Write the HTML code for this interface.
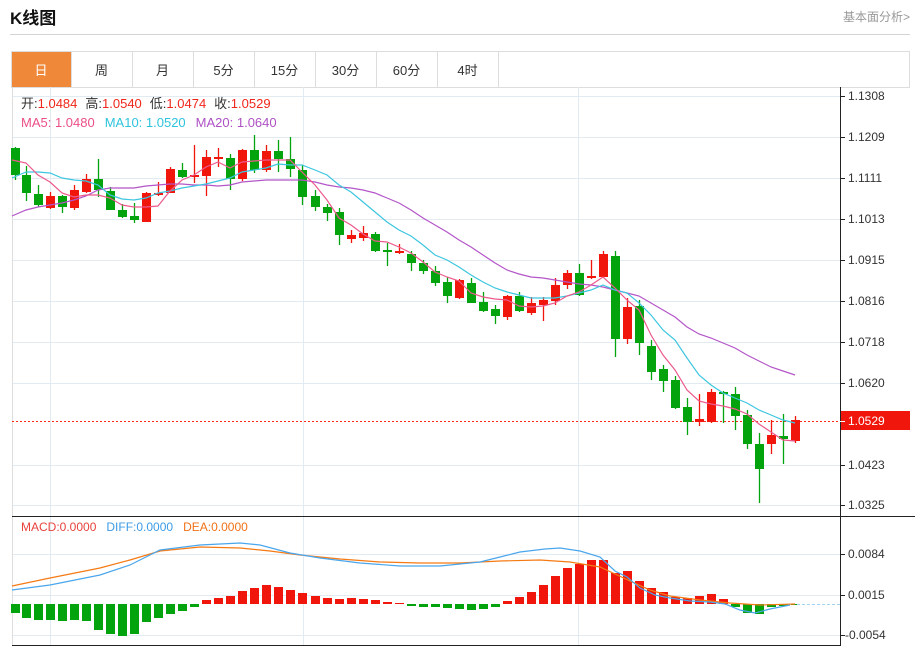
<!DOCTYPE html>
<html><head><meta charset="utf-8"><style>
body{margin:0;width:915px;height:647px;background:#fff;overflow:hidden;font-family:"Liberation Sans","Noto Sans CJK SC",sans-serif;position:relative}
.t{position:absolute}
</style></head><body>
<div class="t" style="left:10px;top:4px;font-size:17px;font-weight:bold;color:#111">K线图</div>
<div class="t" style="left:843px;top:8px;font-size:12px;color:#999">基本面分析&gt;</div>
<div class="t" style="left:10px;top:34px;width:900px;height:1px;background:#d4d4d4"></div>
<svg id="s" class="t" style="left:0;top:0" width="915" height="647" xmlns="http://www.w3.org/2000/svg" font-family="Liberation Sans, Noto Sans CJK SC, sans-serif"></svg>
<script>
var s='';
s+='<rect x="11.5" y="51.5" width="898" height="36" fill="#fff" stroke="#ddd"/>';
s+='<rect x="12" y="52" width="59" height="35" fill="#f0883a"/>';
var tb=[71,132,193,254,315,376,437,498],lb=['日','周','月','5分','15分','30分','60分','4时'];
tb.forEach(function(x){s+='<line x1="'+(x+.5)+'" y1="52" x2="'+(x+.5)+'" y2="87" stroke="#ddd"/>';});
lb.forEach(function(t,i){s+='<text x="'+(i==0?41:(tb[i-1]+tb[i])/2)+'" y="75" font-size="13" text-anchor="middle" fill="'+(i==0?'#fff':'#333')+'">'+t+'</text>';});
[96,137,178,219,260,301,342,383,465,505,554,595,635].forEach(function(y){s+='<line x1="12" y1="'+(y+.5)+'" x2="840" y2="'+(y+.5)+'" stroke="#e3ebf2"/>';});
[50,303,578].forEach(function(x){s+='<line x1="'+(x+.5)+'" y1="87" x2="'+(x+.5)+'" y2="646" stroke="#e3ebf2"/>';});
s+='<line x1="12.5" y1="87" x2="12.5" y2="646" stroke="#ddd"/>';
s+='<line x1="840.5" y1="87" x2="840.5" y2="646" stroke="#222"/>';
s+='<line x1="12" y1="516.5" x2="915" y2="516.5" stroke="#222"/>';
s+='<line x1="12" y1="645.5" x2="840" y2="645.5" stroke="#222"/>';
var pl=[[96,'1.1308'],[137,'1.1209'],[178,'1.1111'],[219,'1.1013'],[260,'1.0915'],[301,'1.0816'],[342,'1.0718'],[383,'1.0620'],[465,'1.0423'],[505,'1.0325'],[554,'0.0084'],[595,'0.0015'],[635,'-0.0054']];
pl.forEach(function(p){s+='<line x1="840" y1="'+(p[0]+.5)+'" x2="845" y2="'+(p[0]+.5)+'" stroke="#222"/><text x="'+(p[1][0]=='-'?845:848)+'" y="'+(p[0]+4)+'" font-size="12" fill="#333">'+p[1]+'</text>';});
s+='<line x1="12" y1="421.5" x2="840" y2="421.5" stroke="#ff2a1a" stroke-width="1" stroke-dasharray="2,2" shape-rendering="crispEdges"/>';
s+='<rect x="841" y="411" width="69" height="19" fill="#f0160c"/><line x1="840" y1="421.5" x2="845" y2="421.5" stroke="#fff"/><text x="848" y="425" font-size="12" fill="#fff">1.0529</text>';
var C=[[15,'g',148,175,147,180],[26,'g',175,193,166,201],[38,'g',194,205,185,207],[50,'r',196,208,192,209],[62,'g',196,207,195,213],[74,'r',190,208,185,210],[86,'r',179,192,174,193],[98,'g',179,190,159,197],[110,'g',191,210,187,210],[122,'g',210,217,204,218],[134,'g',216,220,203,223],[146,'r',193,222,192,222],[158,'r',193,195,182,196],[170,'r',169,193,167,193],[182,'g',170,177,163,178],[194,'r',175,177,145,183],[206,'r',157,176,150,196],[218,'r',157,158,148,167],[230,'g',158,179,154,190],[242,'r',150,179,149,181],[254,'g',150,170,135,173],[266,'r',151,170,145,172],[278,'g',151,159,140,172],[290,'g',159,169,137,177],[302,'g',170,197,165,205],[315,'g',196,207,190,211],[327,'g',207,213,204,221],[339,'g',212,235,208,245],[351,'r',235,239,230,243],[363,'r',233,238,226,241],[375,'g',234,251,232,252],[387,'g',250,251,243,266],[399,'r',251,252,244,254],[411,'g',254,263,251,271],[423,'g',263,271,260,274],[435,'g',271,283,266,286],[447,'g',282,296,277,303],[459,'r',280,298,279,299],[471,'g',283,303,278,303],[483,'g',302,311,292,312],[495,'g',309,316,305,324],[507,'r',296,317,295,320],[519,'g',296,311,292,312],[531,'r',303,313,297,315],[543,'r',300,305,297,321],[555,'r',285,301,278,305],[567,'r',273,285,270,289],[579,'g',273,295,264,296],[591,'r',276,277,260,279],[603,'r',254,277,251,278],[615,'g',256,339,251,357],[627,'r',307,339,298,344],[639,'g',306,343,300,355],[651,'g',346,372,340,380],[663,'g',369,381,365,392],[675,'g',380,408,376,409],[687,'g',407,422,398,435],[699,'r',419,422,394,426],[711,'r',392,422,389,423],[723,'g',392,394,391,423],[735,'g',394,416,387,430],[747,'g',415,444,410,449],[759,'g',444,469,433,503],[771,'r',435,444,420,454],[783,'g',436,439,414,464],[795,'r',420,441,416,443]];
C.forEach(function(c){var col=c[1]=='r'?'#f0160c':'#03a30e';var h=Math.max(c[3]-c[2],2);
s+='<line x1="'+(c[0]+.5)+'" y1="'+c[4]+'" x2="'+(c[0]+.5)+'" y2="'+c[5]+'" stroke="'+col+'" stroke-width="1.3"/>';
s+='<rect x="'+(c[0]-4)+'" y="'+c[2]+'" width="9" height="'+h+'" fill="'+col+'"/>';});
function pline(p,col){s+='<polyline fill="none" stroke="'+col+'" stroke-width="1.2" points="'+p.map(function(a){return a.join(',')}).join(' ')+'"/>';}
var xs=[12,26,38,50,62,74,86,98,110,122,134,146,158,170,182,194,206,218,230,242,254,266,278,290,302,315,327,339,351,363,375,387,399,411,423,435,447,459,471,483,495,507,519,531,543,555,567,579,591,603,615,627,639,651,663,675,687,699,711,723,735,747,759,771,783,795];
function z(a){return xs.map(function(x,i){return [x,a[i]]});}
pline(z([216,210,207,205,203,200,196,190,188,188,188,186,185,184,184,185,185,186,185,182,181,180,180,180,180,182,185,187,188,190,193,198,203,210,218,225,232,240,247,255,263,270,274,277,278,280,282,284,285,287,290,293,296,303,310,317,327,334,338,343,348,355,361,367,371,375]),'#b455c8');
pline(z([178,172,172,173,178,180,181,185,195,199,200,198,193,191,188,186,184,181,178,172,170,168,164,165,165,170,175,185,192,202,212,222,230,236,245,255,260,267,275,282,288,292,295,298,298,298,296,293,290,285,290,293,303,315,330,340,358,375,385,393,398,403,410,415,420,423]),'#3ec6e0');
pline(z([160,163,175,182,193,197,195,195,198,205,207,207,206,191,180,175,167,162,168,162,161,160,160,160,172,185,200,218,225,234,241,242,247,253,262,272,277,281,293,297,299,300,306,307,306,303,296,292,285,277,288,300,310,335,355,370,390,401,404,406,409,414,424,432,440,441]),'#ec5a8c');
var H=[613,618,620,620,621,620,621,630,634,636,634,622,618,614,611,607,600,598,596,591,588,585,587,590,593,596,598,599,598,599,600,602,603,606,607,607,608,609,610,609,607,601,597,592,585,576,568,564,560,560,573,571,581,588,592,597,598,596,594,599,607,613,614,607,606,604];
xs.forEach(function(x,i){if(i==0)x=15;var v=H[i];var col=v<604?'#f0160c':'#03a30e';var y=Math.min(v,604),h=Math.max(Math.abs(v-604),1);s+='<rect x="'+(x-4)+'" y="'+y+'" width="9" height="'+h+'" fill="'+col+'"/>';});
s+='<line x1="797" y1="604.5" x2="840" y2="604.5" stroke="#9fd3f0" stroke-dasharray="3,2"/>';
pline([[12,586],[50,578],[100,568],[130,560],[160,551],[200,547],[240,548],[270,551],[300,555],[340,559],[380,562],[420,563],[460,563],[500,561],[540,560],[570,562],[600,567],[630,581],[650,590],[670,596],[700,600],[730,603],[760,605],[795,604]],'#f57a14');
pline([[12,590],[50,585],[100,575],[130,565],[160,550],[200,545],[240,543],[260,545],[290,553],[320,558],[360,563],[400,566],[440,566],[480,562],[500,557],[520,552],[545,549],[560,548],[580,551],[600,557],[615,571],[627,577],[640,588],[655,595],[670,598],[690,601],[710,602],[725,604],[740,610],[755,613],[770,609],[790,605]],'#4aa6ec');
s+='<text x="21" y="108" font-size="13"><tspan fill="#333">开:</tspan><tspan fill="#f0261c">1.0484</tspan><tspan fill="#333" dx="8">高:</tspan><tspan fill="#f0261c">1.0540</tspan><tspan fill="#333" dx="8">低:</tspan><tspan fill="#f0261c">1.0474</tspan><tspan fill="#333" dx="8">收:</tspan><tspan fill="#f0261c">1.0529</tspan></text>';
s+='<text x="21" y="127" font-size="13"><tspan fill="#ec4f86">MA5: 1.0480</tspan><tspan fill="#2ec3dd" dx="10">MA10: 1.0520</tspan><tspan fill="#ae51c4" dx="10">MA20: 1.0640</tspan></text>';
s+='<text x="21" y="531" font-size="12"><tspan fill="#e8433d">MACD:0.0000</tspan><tspan fill="#3c9be6" dx="10">DIFF:0.0000</tspan><tspan fill="#f07118" dx="10">DEA:0.0000</tspan></text>';
document.getElementById('s').innerHTML=s;
</script>
</body></html>
